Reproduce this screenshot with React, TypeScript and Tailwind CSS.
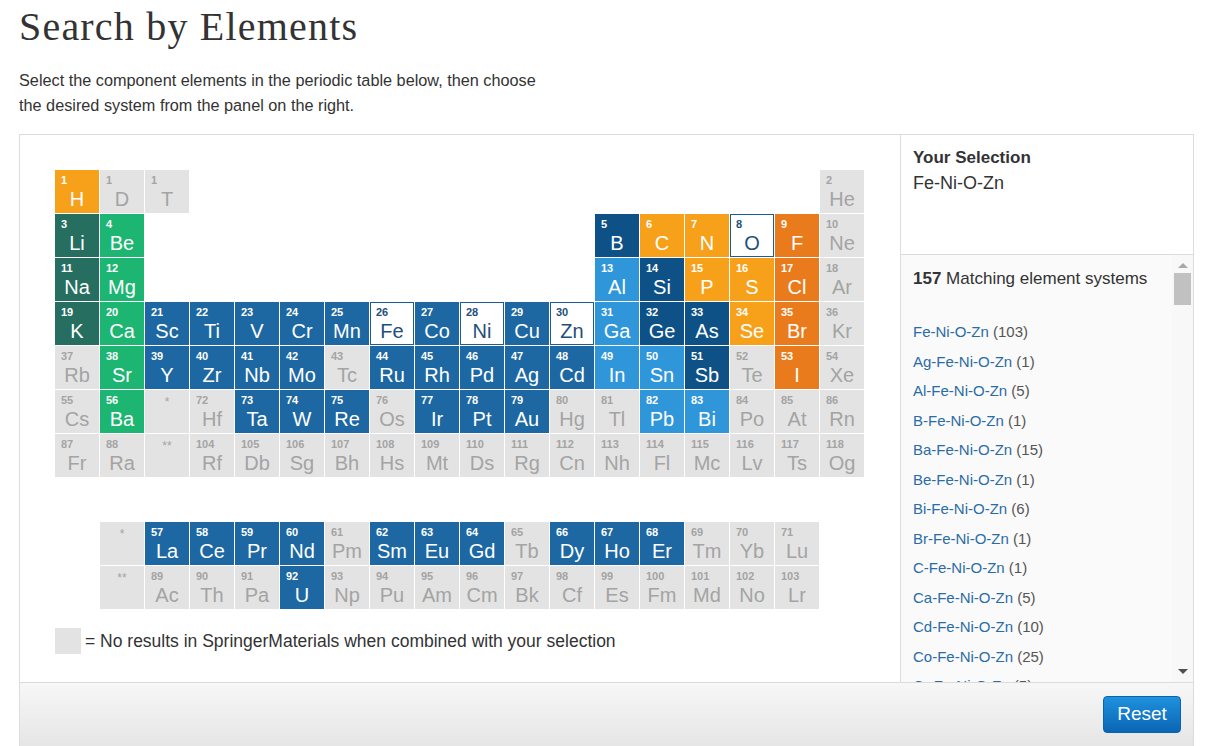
import clsx from "clsx";

type El = { sym: string; num: string; cat: string } | null;

// category -> full class strings
const CAT: Record<string, string> = {
  o: "bg-[#f7a11b] text-white",
  r: "bg-[#ea7b1c] text-white",
  t: "bg-[#256e60] text-white",
  g: "bg-[#1db572] text-white",
  b: "bg-[#1d67a2] text-white",
  d: "bg-[#0e5187] text-white",
  l: "bg-[#2f96da] text-white",
  s: "bg-white text-[#1e4f7b] border border-[#1d5d8e]",
  x: "bg-[#e3e3e3] text-[#a4a4a4]",
};

function parse(row: string): El[] {
  return row.split("|").map((c) => {
    if (c === "-") return null;
    const [sym, num, cat] = c.split(" ");
    return { sym, num, cat };
  });
}

const EMPTY14 = Array(14).fill("-").join("|");
const EMPTY10 = Array(10).fill("-").join("|");

const mainRows = [
  `H 1 o|D 1 x|T 1 x|${EMPTY14}|He 2 x`,
  `Li 3 t|Be 4 g|${EMPTY10}|B 5 d|C 6 o|N 7 o|O 8 s|F 9 r|Ne 10 x`,
  `Na 11 t|Mg 12 g|${EMPTY10}|Al 13 l|Si 14 d|P 15 o|S 16 o|Cl 17 r|Ar 18 x`,
  "K 19 t|Ca 20 g|Sc 21 b|Ti 22 b|V 23 b|Cr 24 b|Mn 25 b|Fe 26 s|Co 27 b|Ni 28 s|Cu 29 b|Zn 30 s|Ga 31 l|Ge 32 d|As 33 d|Se 34 o|Br 35 r|Kr 36 x",
  "Rb 37 x|Sr 38 g|Y 39 b|Zr 40 b|Nb 41 b|Mo 42 b|Tc 43 x|Ru 44 b|Rh 45 b|Pd 46 b|Ag 47 b|Cd 48 b|In 49 l|Sn 50 l|Sb 51 d|Te 52 x|I 53 r|Xe 54 x",
  "Cs 55 x|Ba 56 g|* - x|Hf 72 x|Ta 73 b|W 74 b|Re 75 b|Os 76 x|Ir 77 b|Pt 78 b|Au 79 b|Hg 80 x|Tl 81 x|Pb 82 l|Bi 83 l|Po 84 x|At 85 x|Rn 86 x",
  "Fr 87 x|Ra 88 x|** - x|Rf 104 x|Db 105 x|Sg 106 x|Bh 107 x|Hs 108 x|Mt 109 x|Ds 110 x|Rg 111 x|Cn 112 x|Nh 113 x|Fl 114 x|Mc 115 x|Lv 116 x|Ts 117 x|Og 118 x",
].map(parse);

const fRows = [
  "* - x|La 57 b|Ce 58 b|Pr 59 b|Nd 60 b|Pm 61 x|Sm 62 b|Eu 63 b|Gd 64 b|Tb 65 x|Dy 66 b|Ho 67 b|Er 68 b|Tm 69 x|Yb 70 x|Lu 71 x",
  "** - x|Ac 89 x|Th 90 x|Pa 91 x|U 92 b|Np 93 x|Pu 94 x|Am 95 x|Cm 96 x|Bk 97 x|Cf 98 x|Es 99 x|Fm 100 x|Md 101 x|No 102 x|Lr 103 x",
].map(parse);

const systems: [string, number][] = [
  ["Fe-Ni-O-Zn", 103],
  ["Ag-Fe-Ni-O-Zn", 1],
  ["Al-Fe-Ni-O-Zn", 5],
  ["B-Fe-Ni-O-Zn", 1],
  ["Ba-Fe-Ni-O-Zn", 15],
  ["Be-Fe-Ni-O-Zn", 1],
  ["Bi-Fe-Ni-O-Zn", 6],
  ["Br-Fe-Ni-O-Zn", 1],
  ["C-Fe-Ni-O-Zn", 1],
  ["Ca-Fe-Ni-O-Zn", 5],
  ["Cd-Fe-Ni-O-Zn", 10],
  ["Co-Fe-Ni-O-Zn", 25],
  ["Cr-Fe-Ni-O-Zn", 5],
  ["Cs-Fe-Ni-O-Zn", 2],
];

function Cell({ el }: { el: El }) {
  if (!el) return <div className="h-[43px]" />;
  if (el.num === "-") {
    return (
      <div className="h-[43px] bg-[#e3e3e3] pt-[6px] text-center text-[12px] leading-none text-[#a4a4a4]">
        {el.sym}
      </div>
    );
  }
  const sel = el.cat === "s";
  return (
    <div className={clsx("flex h-[43px] flex-col cursor-pointer", CAT[el.cat])}>
      <span
        className={clsx(
          "text-[11px] font-bold leading-[11px]",
          sel ? "pl-[5px] pt-[4px]" : "pl-[6px] pt-[5px]"
        )}
      >
        {el.num}
      </span>
      <span className="mt-[3px] text-center text-[20px] leading-[20px]">{el.sym}</span>
    </div>
  );
}

export default function App() {
  return (
    <div className="min-h-[746px] bg-white font-['Liberation_Sans',Arial,sans-serif] text-[#333]">
      <div className="px-[19px] pt-[5px]">
        <h1 className="font-['Liberation_Serif',Georgia,serif] text-[40px] leading-[44px] tracking-[1.2px] text-[#333]">
          Search by Elements
        </h1>
        <p className="mt-[19px] text-[16.25px] leading-[25px]">
          Select the component elements in the periodic table below, then choose
          <br />
          the desired system from the panel on the right.
        </p>
      </div>

      {/* Main panel */}
      <div className="ml-[19px] mt-[16px] w-[1175px] border border-[#dcdcdc]">
        <div className="flex h-[547px]">
          {/* Periodic table */}
          <div className="w-[880px] pl-[35px] pt-[35px]">
            <div className="grid w-[809px] grid-cols-[repeat(18,44px)] gap-px">
              {mainRows.flat().map((el, i) => (
                <Cell key={i} el={el} />
              ))}
            </div>
            <div className="ml-[45px] mt-[45px] grid w-[719px] grid-cols-[repeat(16,44px)] gap-px">
              {fRows.flat().map((el, i) => (
                <Cell key={i} el={el} />
              ))}
            </div>
            <div className="mt-[19px] flex items-center">
              <div className="h-[26px] w-[26px] bg-[#e3e3e3]" />
              <span className="ml-[4px] text-[17.5px] leading-[26px]">
                = No results in SpringerMaterials when combined with your selection
              </span>
            </div>
          </div>

          {/* Right side panel */}
          <div className="flex w-[293px] flex-col border-l border-[#dcdcdc]">
            <div className="h-[120px] border-b border-[#dcdcdc] px-[12px] pt-[11px]">
              <div className="text-[17px] font-bold leading-[24px]">Your Selection</div>
              <div className="text-[18px] leading-[26px]">Fe-Ni-O-Zn</div>
            </div>
            <div className="flex min-h-0 flex-1">
              <div className="flex-1 overflow-hidden bg-[#fafafa] px-[12px] pt-[12px]">
                <div className="text-[17px] leading-[24px]">
                  <span className="font-bold">157</span> Matching element systems
                </div>
                <ul className="mt-[26px]">
                  {systems.map(([s, n]) => (
                    <li key={s} className="h-[29.5px] text-[15px] leading-[29.5px]">
                      <a href="#" className="text-[#2a6ca6]">
                        {s}
                      </a>{" "}
                      <span className="text-[#555]">({n})</span>
                    </li>
                  ))}
                </ul>
              </div>
              {/* scrollbar */}
              <div className="flex w-[21px] flex-col items-center bg-[#f8f8f8] pt-[8px] pb-[8px]">
                <div className="h-0 w-0 border-x-[5px] border-b-[5px] border-x-transparent border-b-[#a8a8a8]" />
                <div className="mt-[5px] h-[32px] w-[17px] bg-[#c1c1c1]" />
                <div className="flex-1" />
                <div className="h-0 w-0 border-x-[5px] border-t-[5px] border-x-transparent border-t-[#505050]" />
              </div>
            </div>
          </div>
        </div>

        {/* Footer */}
        <div className="flex h-[70px] justify-end border-t border-[#dcdcdc] bg-gradient-to-b from-[#f7f7f7] to-[#e4e4e4] pr-[12px] pt-[13px]">
          <button className="h-[37px] w-[78px] rounded-[4px] border border-[#0b62ad] bg-gradient-to-b from-[#1f91de] to-[#0a66b4] text-[19px] text-white">
            Reset
          </button>
        </div>
      </div>
    </div>
  );
}
